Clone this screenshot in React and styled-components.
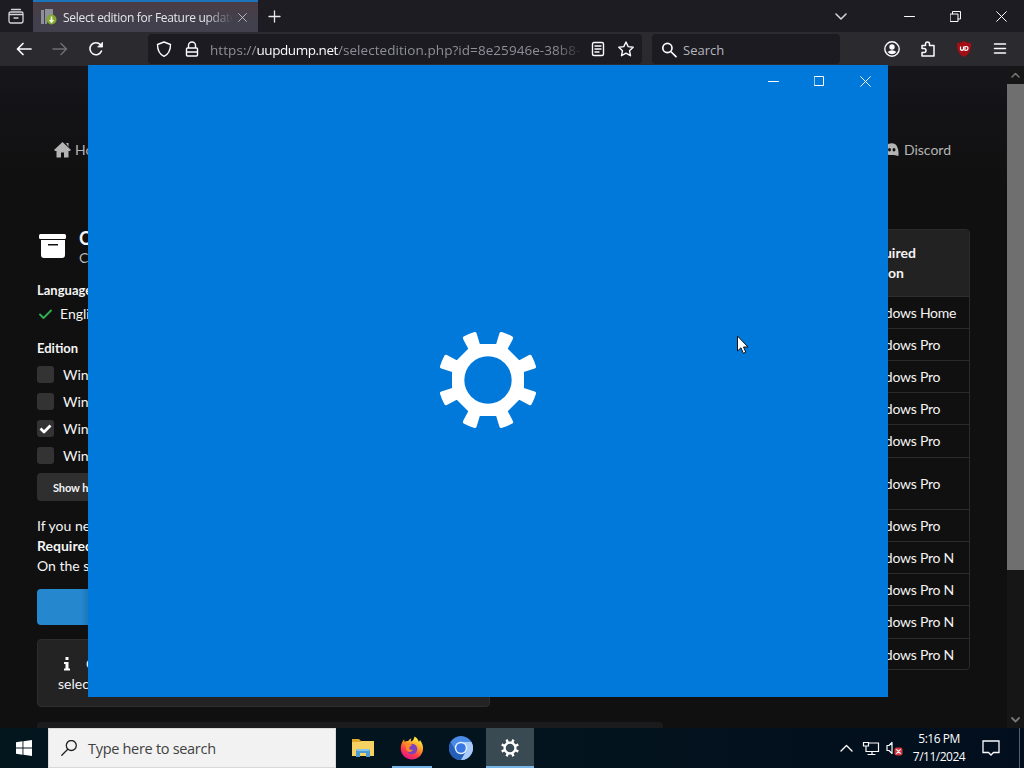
import React from "react";
import styled, { createGlobalStyle } from "styled-components";

const GlobalStyle = createGlobalStyle`
  * {
    box-sizing: border-box;
  }
  body {
    margin: 0;
    background: #000;
    overflow: hidden;
  }
  svg {
    display: block;
    flex: none;
  }
`;

const Desktop = styled.div`
  position: relative;
  display: flex;
  flex-direction: column;
  width: 1024px;
  height: 768px;
  overflow: hidden;
  font-family: "Open Sans", sans-serif;
  color: #fbfbfe;
`;

/* browser chrome */

const TabBar = styled.div`
  display: flex;
  align-items: center;
  height: 32px;
  background: #1d1c22;
`;

const FirefoxView = styled.div`
  width: 33px;
  padding-left: 8px;
`;

const Tab = styled.div`
  display: flex;
  align-items: center;
  width: 225px;
  height: 32px;
  padding: 0 10px 0 8px;
  border-top: 2px solid #1c74bd;
  background: linear-gradient(#4a3c44, #42404c 60%);
`;

const TabTitle = styled.div`
  width: 170px;
  margin: 0 5px 0 6px;
  font-size: 12px;
  letter-spacing: -0.3px;
  color: #e6e6ea;
  white-space: nowrap;
  mask-image: linear-gradient(to right, #000 142px, transparent 170px);
`;

const NewTab = styled.div`
  margin-left: 10px;
`;

const CaptionButtons = styled.div`
  display: flex;
  align-items: center;
  margin-left: auto;
`;

const CaptionButton = styled.div`
  display: flex;
  justify-content: center;
  width: ${(props) => props.$width || 46}px;
`;

const NavBar = styled.div`
  display: flex;
  align-items: center;
  height: 34px;
  background: #2a2a2f;
`;

const NavButtons = styled.div`
  display: flex;
  gap: 20px;
  width: 148px;
  padding-left: 16px;
`;

const UrlBar = styled.div`
  display: flex;
  align-items: center;
  width: 494px;
  height: 30px;
  padding: 0 8px;
  border-radius: 4px;
  background: #1c1b21;
`;

const UrlText = styled.div`
  width: 372px;
  margin: 0 8px 0 10px;
  padding-top: 1px;
  font-size: 13.5px;
  letter-spacing: 0.06px;
  color: #8f8f98;
  white-space: nowrap;
  mask-image: linear-gradient(to right, #000 345px, transparent 374px);
  span {
    color: #fbfbfe;
    letter-spacing: -0.45px;
  }
`;

const SearchBar = styled.div`
  display: flex;
  align-items: center;
  gap: 6px;
  width: 188px;
  height: 30px;
  margin-left: 10px;
  padding: 1px 0 0 9px;
  border-radius: 4px;
  background: #1c1b21;
  font-size: 13px;
  color: #b5b5bd;
`;

const ToolbarIcons = styled.div`
  display: flex;
  gap: 18px;
  margin-left: 43px;
`;

/* web page */

const Viewport = styled.div`
  display: flex;
  height: 662px;
  background: #111;
`;

const Page = styled.div`
  width: 1007px;
  height: 662px;
  overflow: hidden;
  font-family: Lato, sans-serif;
  font-size: 14px;
  line-height: 20px;
  color: #f4f4f4;
  background: linear-gradient(#16161c, #131316 50px, #101010 120px);
`;

const SiteMenu = styled.div`
  display: flex;
  justify-content: space-between;
  height: 163px;
  padding: 74px 56px 0 54px;
  color: #b4b4b4;
`;

const MenuItem = styled.div`
  display: flex;
  align-items: center;
  gap: 4px;
  height: 20px;
`;

const Columns = styled.div`
  display: flex;
  justify-content: space-between;
  height: 499px;
  padding: 0 37px;
`;

const LeftColumn = styled.div`
  width: 453px;
`;

const Heading = styled.div`
  display: flex;
  gap: 13px;
  height: 51px;
`;

const HeadingText = styled.div`
  font-size: 18px;
  font-weight: bold;
  line-height: 18px;
`;

const SubHeading = styled.div`
  padding-top: 2px;
  font-size: 14px;
  font-weight: normal;
  line-height: 18px;
  color: #b8b8b8;
`;

const FieldLabel = styled.div`
  height: 20px;
  font-size: 13px;
  font-weight: bold;
`;

const Dropdown = styled.div`
  display: flex;
  align-items: center;
  gap: 7px;
  height: 24px;
  padding-top: 3px;
  margin-bottom: 14px;
`;

const CheckRow = styled.div`
  display: flex;
  align-items: center;
  gap: 9px;
  height: 27px;
`;

const CheckBox = styled.div`
  display: flex;
  align-items: center;
  justify-content: center;
  width: 17px;
  height: 17px;
  border-radius: 3px;
  background: #333;
`;

const Checks = styled.div`
  padding-top: 3px;
`;

const SmallButton = styled.div`
  width: 150px;
  height: 28px;
  margin: 4px 0 15px;
  padding-left: 16px;
  border-radius: 4px;
  background: #2f2f30;
  font-size: 11px;
  font-weight: bold;
  line-height: 29px;
  letter-spacing: -0.1px;
`;

const PrimaryButton = styled.div`
  height: 36px;
  margin: 13px 0 14px;
  border-radius: 4px;
  background: linear-gradient(to right, #2587ce 44px, #1e79bb 50px);
`;

const Message = styled.div`
  height: 68px;
  padding: 14px 20px;
  border: 1px solid #2d2d2d;
  border-radius: 4px;
  background: #232324;
`;

const MessageHead = styled.div`
  display: flex;
  align-items: center;
  gap: 15px;
  height: 20px;
  padding-left: 5px;
`;

const NextCard = styled.div`
  width: 626px;
  height: 6px;
  margin-top: 15px;
  border-radius: 4px 4px 0 0;
  background: #1b1b1d;
`;

const Table = styled.div`
  width: 451px;
  height: 441px;
  border: 1px solid #2b2b2c;
  border-radius: 4px;
`;

const HeadRow = styled.div`
  height: 67px;
  padding: 13px 0 0 340px;
  border-bottom: 1px solid #2d2d2d;
  background: #222223;
  font-weight: bold;
`;

const Row = styled.div`
  display: flex;
  align-items: center;
  height: ${(props) => props.$height || 32}px;
  padding-left: 340px;
  letter-spacing: -0.25px;
  border-bottom: 1px solid #2b2b2c;
  &:last-child {
    border-bottom: 0;
  }
`;

const ScrollBar = styled.div`
  display: flex;
  flex-direction: column;
  align-items: center;
  width: 17px;
  padding: 6px 0 5px;
  background: #161617;
`;

const ScrollThumb = styled.div`
  width: 17px;
  height: 486px;
  margin: 6px 0 auto;
  background: #6f6f70;
`;

/* settings splash window */

const SettingsWindow = styled.div`
  position: absolute;
  left: 88px;
  top: 65px;
  display: flex;
  flex-direction: column;
  width: 800px;
  height: 632px;
  background: #0179db;
`;

const WindowTitleBar = styled.div`
  display: flex;
  align-items: center;
  height: 32px;
`;

const Splash = styled.div`
  display: flex;
  flex: 1;
  justify-content: center;
  padding-top: 233px;
`;

const Pointer = styled.div`
  position: absolute;
  left: 736px;
  top: 335px;
`;

/* taskbar */

const TaskBar = styled.div`
  display: flex;
  height: 40px;
  background: linear-gradient(to right, #03151d, #03141e 50%, #020e1d);
`;

const StartButton = styled.div`
  display: flex;
  align-items: center;
  justify-content: center;
  width: 48px;
`;

const TaskSearch = styled.div`
  display: flex;
  align-items: center;
  gap: 11px;
  width: 288px;
  padding-left: 12px;
  border: 1px solid #d5d9dc;
  background: #f2f2f2;
  font-size: 14.5px;
  letter-spacing: -0.3px;
  color: #414141;
`;

const Apps = styled.div`
  display: flex;
  gap: 1px;
  padding-left: 3px;
`;

const AppButton = styled.div`
  display: flex;
  align-items: center;
  justify-content: center;
  width: 48px;
  height: 40px;
`;

const RunningApp = styled(AppButton)`
  background: linear-gradient(#76b5e5, #76b5e5) bottom / ${(props) => (props.$active ? 48 : 40)}px 2px
    no-repeat ${(props) => (props.$active ? "#3a4a52" : "transparent")};
`;

const Tray = styled.div`
  display: flex;
  align-items: center;
  margin-left: auto;
`;

const Clock = styled.div`
  width: 66px;
  margin: 0 10px 0 2px;
  font-size: 12px;
  line-height: 18px;
  letter-spacing: -0.5px;
  text-align: center;
  white-space: nowrap;
  color: #fff;
`;

const ShowDesktop = styled.div`
  width: 5px;
  height: 40px;
  margin-left: 19px;
  border-left: 1px solid #51606c;
`;

const Spacer = styled.div`
  width: ${(props) => props.$width}px;
`;

const Icon = ({ w = 16, h, color = "#fbfbfe", sw = 1.4, children, box }) => (
  <svg
    width={w}
    height={h || w}
    viewBox={box || `0 0 ${w} ${h || w}`}
    fill="none"
    stroke={color}
    strokeWidth={sw}
    strokeLinecap="round"
    strokeLinejoin="round"
  >
    {children}
  </svg>
);

const Gear = ({ size }) => (
  <svg width={size} height={size} viewBox="-50 -50 100 100">
    <defs>
      <mask id={`hole${size}`}>
        <rect x="-50" y="-50" width="100" height="100" fill="#fff" />
        <circle r="23.7" fill="#000" />
      </mask>
    </defs>
    <g fill="#fff" mask={`url(#hole${size})`}>
      <polygon points="36,15 15,36 -15,36 -36,15 -36,-15 -15,-36 15,-36 36,-15" />
      {[22.5, 67.5, 112.5, 157.5, 202.5, 247.5, 292.5, 337.5].map((angle) => (
        <path
          key={angle}
          transform={`rotate(${angle})`}
          d="M-6.3 -30V-37L-7.3 -47.5Q-7.4 -49.3 -5.8 -49.6Q0 -50.2 5.8 -49.6Q7.4 -49.3 7.3 -47.5L6.3 -37V-30Z"
        />
      ))}
    </g>
  </svg>
);

const Minimize = ({ color }) => (
  <Icon w={11} color={color} sw={1}>
    <path d="M0.5 5.5H10.5" />
  </Icon>
);

const Close = ({ color, size = 11 }) => (
  <Icon w={size} box="0 0 11 11" color={color} sw={1}>
    <path d="M0.7 0.7L10.3 10.3M10.3 0.7L0.7 10.3" />
  </Icon>
);

const FirefoxLogo = () => (
  <svg width="24" height="24" viewBox="0 0 24 24">
    <defs>
      <linearGradient id="fox" x1="0.8" y1="0.05" x2="0.3" y2="1">
        <stop offset="0.1" stopColor="#ffe23c" />
        <stop offset="0.45" stopColor="#ff8a25" />
        <stop offset="0.7" stopColor="#fc3b4c" />
        <stop offset="1" stopColor="#e31587" />
      </linearGradient>
    </defs>
    <path
      fill="url(#fox)"
      d="M14.5 0.5C18 2.5 18.5 5 19 6L20 4C22 7 23.5 10 23 13.5C22.3 19.5 17.7 23.4 12 23.4C5.5 23.4 0.7 18.6 0.7 12.3C0.7 8.5 2.2 5.4 4.2 3.2L4.6 5.9C5.5 5.1 6.8 4.9 8 5.2C9.2 3.4 10.4 2.8 11.5 2.5C10.8 3.5 10.7 4.6 11 5.5C12.7 5.4 13.9 3.2 14.5 0.5Z"
    />
    <circle cx="12" cy="13" r="5.3" fill="#7c43bd" />
    <path fill="#ff8926" d="M5.5 8C8 7 9.5 8.2 12 8.6C11.7 10.3 9.8 10.4 9.2 11.5C9 13.5 10.5 14.5 13 13.6C12 16.8 7.5 16.5 6.3 13.7Z" />
  </svg>
);

const ChromiumLogo = () => (
  <svg width="24" height="24" viewBox="-12 -12 24 24">
    <circle r="12" fill="#4a8be8" />
    <path fill="#255fb7" d="M-10.4 -6A12 12 0 0 0 0 12L5.2 3A6 6 0 0 1 -5.2 3Z" />
    <path fill="#a9cbfa" d="M0 -6H10.4A12 12 0 0 1 0 12L5.2 3A6 6 0 0 0 0 -6Z" />
    <circle r="6.2" fill="#e8f1fe" />
    <circle r="4.8" fill="#3878e4" />
  </svg>
);

const Folder = () => (
  <svg width="22" height="20" viewBox="0 0 22 20">
    <path fill="#e0a92c" d="M0 1H7L9 3H22V18H0Z" />
    <path fill="#f6d262" d="M0 4H8L10 3H22V18H0Z" />
    <path fill="#4d9bd5" d="M4 19V13Q4 11 6 11H16Q18 11 18 13V19H14V15H8V19Z" />
    <path fill="#86c4ed" d="M5 11H17V13H5Z" />
  </svg>
);

const rows = [
  ["Windows Home"],
  ["Windows Pro"],
  ["Windows Pro"],
  ["Windows Pro"],
  ["Windows Pro", 33],
  ["Windows Pro", 52],
  ["Windows Pro"],
  ["Windows Pro N"],
  ["Windows Pro N"],
  ["Windows Pro N", 33],
  ["Windows Pro N"],
];

const BrowserTabs = () => (
  <TabBar>
    <FirefoxView>
      <Icon color="#d5d5db" sw={1.3}>
        <path d="M3.5 1.5H12.5M2.5 4H13.5Q15 4 15 5.5V13Q15 15 13 15H3Q1 15 1 13V5.5Q1 4 2.5 4M1 6.5H15M6 10H10" />
      </Icon>
    </FirefoxView>
    <Tab>
      <svg width="16" height="16" viewBox="0 0 16 16">
        <path fill="#8e9099" d="M0 1H3V15H0ZM4 0H12V6Q5 6 6 15H4Z" />
        <circle cx="10.5" cy="10.5" r="5" fill="#82a832" />
        <path d="M10.5 7.5V13M8.5 11L10.5 13L12.5 11" stroke="#f0f5dc" strokeWidth="1.6" fill="none" />
      </svg>
      <TabTitle>Select edition for Feature update</TabTitle>
      <Close size={9} color="#d0d0d6" />
    </Tab>
    <NewTab>
      <Icon w={13} sw={1.3} color="#e8e8ec">
        <path d="M6.5 1V12M1 6.5H12" />
      </Icon>
    </NewTab>
    <CaptionButtons>
      <CaptionButton $width={90}>
        <Icon w={12} h={7} sw={1.5} color="#d5d5da">
          <path d="M1 1L6 6L11 1" />
        </Icon>
      </CaptionButton>
      <CaptionButton>
        <Minimize />
      </CaptionButton>
      <CaptionButton>
        <Icon w={11} sw={1}>
          <path d="M0.5 3H8V10.5H0.5ZM2.5 3V0.5H10.5V8H8" strokeLinejoin="miter" />
        </Icon>
      </CaptionButton>
      <CaptionButton>
        <Close />
      </CaptionButton>
    </CaptionButtons>
  </TabBar>
);

const BrowserNav = () => (
  <NavBar>
    <NavButtons>
      <Icon sw={1.7}>
        <path d="M1.5 8H15M7 2.5L1.5 8L7 13.5" />
      </Icon>
      <Icon sw={1.5} color="#6e6e75">
        <path d="M1 8H14.5M9 2.5L14.5 8L9 13.5" />
      </Icon>
      <Icon sw={1.6}>
        <path d="M13.5 10A6 6 0 1 1 12.5 3.8L14 5.5" />
        <path d="M14.5 1.5V6H10Z" fill="#fbfbfe" strokeWidth="0.8" />
      </Icon>
    </NavButtons>
    <UrlBar>
      <Icon>
        <path d="M8 1L14.5 3.5C14.5 9.5 12 13.5 8 15.3C4 13.5 1.5 9.5 1.5 3.5Z" />
      </Icon>
      <Spacer $width={12} />
      <Icon>
        <path d="M4.5 7V4.5A3.5 3.5 0 0 1 11.5 4.5V7M3.5 7H12.5Q13.5 7 13.5 8V14Q13.5 15 12.5 15H3.5Q2.5 15 2.5 14V8Q2.5 7 3.5 7ZM3 11H13" />
      </Icon>
      <UrlText>
        https://<span>uupdump.net</span>/selectedition.php?id=8e25946e-38b8-
      </UrlText>
      <Icon>
        <path d="M4 1.5H12Q13.5 1.5 13.5 3V13Q13.5 14.5 12 14.5H4Q2.5 14.5 2.5 13V3Q2.5 1.5 4 1.5ZM5 5H11M5 8H11M5 11H9" />
      </Icon>
      <Spacer $width={12} />
      <Icon>
        <path d="M8 1L10.2 5.6L15.2 6.2L11.5 9.7L12.5 14.7L8 12.2L3.5 14.7L4.5 9.7L0.8 6.2L5.8 5.6Z" />
      </Icon>
    </UrlBar>
    <SearchBar>
      <Icon sw={1.7}>
        <path d="M11 6A4.6 4.6 0 1 1 1.8 6A4.6 4.6 0 1 1 11 6ZM9.8 9.5L15 14.7" />
      </Icon>
      Search
    </SearchBar>
    <ToolbarIcons>
      <Icon w={18}>
        <circle cx="9" cy="9" r="7.2" />
        <circle cx="9" cy="7" r="2.7" fill="#fbfbfe" stroke="none" />
        <path d="M4.5 12Q9 8.5 13.5 12Q9 16.5 4.5 12Z" fill="#fbfbfe" stroke="none" />
      </Icon>
      <Icon w={18} sw={1.5}>
        <path d="M3 16V12.5H5A2 2 0 0 0 5 8.5H3V5.5H6.5V4A2 2 0 0 1 10.5 4V5.5H15V16Z" />
      </Icon>
      <svg width="18" height="18" viewBox="0 0 18 18">
        <path fill="#a40d16" d="M9 1Q12 3 16 3C16.5 10 14 14.5 9 17C4 14.5 1.5 10 2 3Q6 3 9 1Z" />
        <path
          d="M5.5 6.5V9.5Q7 11 8.5 9.5V6.5M10 6.5V10.5H11Q13 10 13 8.5Q13 6.5 11 6.5Z"
          stroke="#fff"
          strokeWidth="1.2"
          fill="none"
        />
      </svg>
      <Icon w={18} sw={1.5}>
        <path d="M3.5 4H14.5M3.5 8.5H14.5M3.5 13H14.5" />
      </Icon>
    </ToolbarIcons>
  </NavBar>
);

const WebPage = () => (
  <Viewport>
    <Page>
      <SiteMenu>
        <MenuItem>
          <svg width="17" height="16" viewBox="0 0 17 16">
            <path fill="#b4b4b4" d="M8.5 0L17 8L15.8 9H14.5V15.5H10V10.5H7V15.5H2.5V9H1.2L0 8ZM12 1H14.5V5Z" />
          </svg>
          Home
        </MenuItem>
        <MenuItem>
          <svg width="15" height="14" viewBox="0 0 15 14">
            <path
              fill="#b4b4b4"
              fillRule="evenodd"
              d="M3 1Q7 -0.5 10 1Q13 3 13.5 9.5V13L9 12H4L1 11Q0 4 3 1ZM9 5A1.5 1.8 0 1 0 9 8.6A1.5 1.8 0 1 0 9 5ZM4.500 5A1.500 1.800 0 1 0 4.500 8.600A1.500 1.800 0 1 0 4.500 5Z"
            />
          </svg>
          Discord
        </MenuItem>
      </SiteMenu>
      <Columns>
        <LeftColumn>
          <Heading>
            <svg width="29" height="32" viewBox="0 0 29 32">
              <rect x="2" y="5" width="27" height="5" rx="1.5" fill="#fff" />
              <path fill="#fff" fillRule="evenodd" d="M4 11H28V26Q28 29 25 29H7Q4 29 4 26ZM11 15V16.5H21V15Z" />
            </svg>
            <HeadingText>
              Choose
              <SubHeading>Choose</SubHeading>
            </HeadingText>
          </Heading>
          <FieldLabel>Language</FieldLabel>
          <Dropdown>
            <Icon sw={1.9} color="#2fae52">
              <path d="M3 8.5L6.5 12L14 4.5" />
            </Icon>
            English
          </Dropdown>
          <FieldLabel>Edition</FieldLabel>
          <Checks>
            {[false, false, true, false].map((checked, i) => (
              <CheckRow key={i}>
                <CheckBox>
                  {checked && (
                    <Icon w={13} sw={2.8} color="#fff">
                      <path d="M1.5 6.5L5 10L11.5 3.5" strokeLinecap="butt" />
                    </Icon>
                  )}
                </CheckBox>
                Windows
              </CheckRow>
            ))}
          </Checks>
          <SmallButton>Show help</SmallButton>
          <div>If you need</div>
          <b>Required</b>
          <div>On the server</div>
          <PrimaryButton />
          <Message>
            <MessageHead>
              <svg width="8" height="14" viewBox="0 0 8 14">
                <path fill="#fff" d="M2.5 0H5.5V3H2.5ZM1 5H5.5V11.5H7V13.5H1V11.5H2.5V7H1Z" />
              </svg>
              Click
            </MessageHead>
            selected
          </Message>
          <NextCard />
        </LeftColumn>
        <Table>
          <HeadRow>
            Required
            <br />
            edition
          </HeadRow>
          {rows.map(([name, height], i) => (
            <Row key={i} $height={height}>
              {name}
            </Row>
          ))}
        </Table>
      </Columns>
    </Page>
    <ScrollBar>
      <Icon w={9} h={6} sw={1.5} color="#77777b">
        <path d="M1 5L4.5 1.5L8 5" />
      </Icon>
      <ScrollThumb />
      <Icon w={9} h={6} sw={1.8} color="#77777b">
        <path d="M1 1L4.5 4.5L8 1" />
      </Icon>
    </ScrollBar>
  </Viewport>
);

const App = () => (
  <Desktop>
    <GlobalStyle />
    <BrowserTabs />
    <BrowserNav />
    <WebPage />
    <TaskBar>
      <StartButton>
        <svg width="16" height="16" viewBox="0 0 16 16">
          <path fill="#fff" d="M0 2.3L6.5 1.3V7.5H0ZM7.4 1.2L16 0V7.5H7.4ZM0 8.5H6.5V14.7L0 13.7ZM7.4 8.5H16V16L7.4 14.8Z" />
        </svg>
      </StartButton>
      <TaskSearch>
        <Icon sw={1.3} color="#222">
          <path d="M15.3 5.5A5 5 0 1 1 5.3 5.5A5 5 0 1 1 15.3 5.5ZM6.5 9.5L0.8 15.2" />
        </Icon>
        Type here to search
      </TaskSearch>
      <Apps>
        <AppButton>
          <Folder />
        </AppButton>
        <RunningApp>
          <FirefoxLogo />
        </RunningApp>
        <AppButton>
          <ChromiumLogo />
        </AppButton>
        <RunningApp $active>
          <Gear size={18} />
        </RunningApp>
      </Apps>
      <Tray>
        <Icon w={13} h={8} sw={1.4}>
          <path d="M1 7L6.5 1.5L12 7" />
        </Icon>
        <Spacer $width={9} />
        <Icon w={18} sw={1.2}>
          <path d="M7 4H16.5V12.5H4V10M10 12.5V15.5M6 15.5H13M1.5 3.5H6.5V7H1.5ZM4 7V10" strokeLinejoin="miter" />
        </Icon>
        <Spacer $width={6} />
        <Icon w={18} sw={1.2}>
          <path d="M1 6.5H3L6 3.5V14.5L3 11.5H1Z" />
          <rect x="8.5" y="8.5" width="8" height="8" rx="2" fill="#d8353e" stroke="none" />
          <path d="M10.7 10.7L14.3 14.3M14.3 10.7L10.7 14.3" stroke="#fff" />
        </Icon>
        <Clock>
          5:16 PM
          <br />
          7/11/2024
        </Clock>
        <Icon w={18} sw={1.3}>
          <path d="M1 2H17V13.5H11.5L9 16L6.5 13.5H1Z" strokeLinejoin="miter" />
        </Icon>
        <ShowDesktop />
      </Tray>
    </TaskBar>
    <SettingsWindow>
      <WindowTitleBar>
        <CaptionButtons>
          <CaptionButton>
            <Minimize color="#fff" />
          </CaptionButton>
          <CaptionButton>
            <Icon w={11} sw={1} color="#fff">
              <path d="M0.5 0.5H9.5V9.5H0.5Z" strokeLinejoin="miter" />
            </Icon>
          </CaptionButton>
          <CaptionButton>
            <Close color="#fff" />
          </CaptionButton>
        </CaptionButtons>
      </WindowTitleBar>
      <Splash>
        <Gear size={100} />
      </Splash>
    </SettingsWindow>
    <Pointer>
      <svg width="13" height="20" viewBox="0 0 13 20">
        <path d="M1.5 1V16L5 12.8L7.3 18.3L9.8 17.2L7.5 12H12Z" fill="#fff" stroke="#111" strokeWidth="1" />
      </svg>
    </Pointer>
  </Desktop>
);

export default App;
